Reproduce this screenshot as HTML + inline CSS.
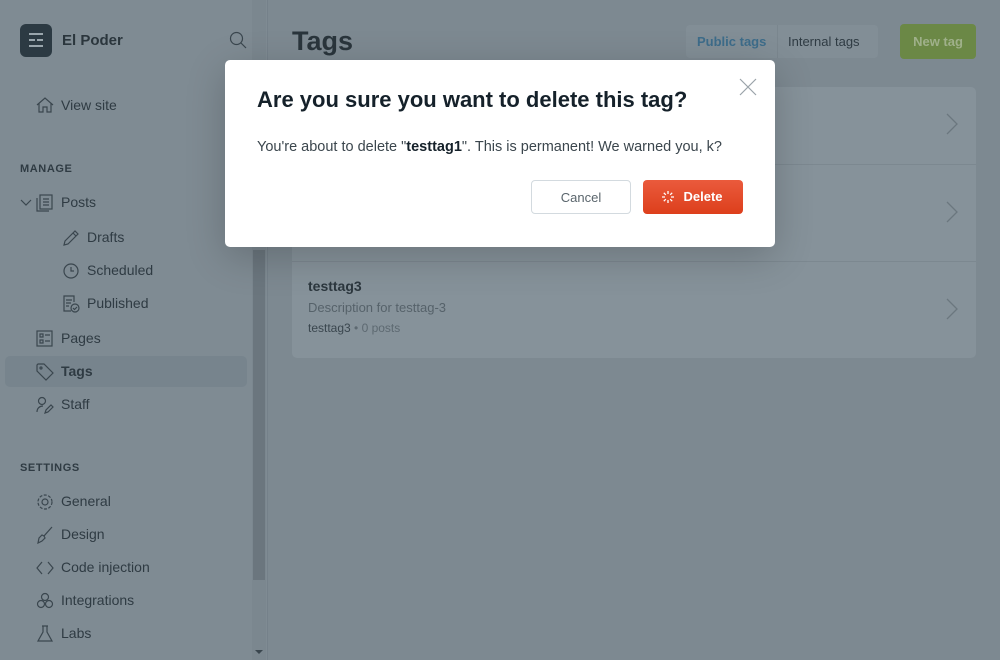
<!DOCTYPE html>
<html><head><meta charset="utf-8"><style>
*{box-sizing:border-box;margin:0;padding:0}
body{width:1000px;height:660px;overflow:hidden;font-family:"Liberation Sans",sans-serif;background:#7d8991;position:relative;color:#2f3a41}
.sb{position:absolute;left:0;top:0;width:268px;height:660px;background:#7f8b93;border-right:1px solid #75818a}
.logo{position:absolute;left:20px;top:24px;width:32px;height:33px;border-radius:6px;background:#2c3a43}
.logo i{position:absolute;height:2px;background:#9aa6ad}
.brand{position:absolute;left:62px;top:32px;font-weight:bold;font-size:15px;color:#2b363d}
.it{position:absolute;left:61px;font-size:14px;color:#2f3b43}
.sub{left:87px}
.hd{position:absolute;left:20px;font-size:11px;letter-spacing:.6px;color:#2f3b43;font-weight:bold}
.ic{position:absolute;stroke:#3a464e;fill:none;stroke-width:1.2}
.act{position:absolute;left:5px;top:356px;width:242px;height:31px;border-radius:5px;background:#77848d}
.track{position:absolute;left:252px;top:0;width:14px;height:660px;background:#7b878f}
.thumb{position:absolute;left:253px;top:250px;width:12px;height:330px;background:#6b767e}
h1{position:absolute;left:292px;top:26px;font-size:27px;font-weight:bold;color:#2a353c}
.seg{position:absolute;left:686px;top:25px;width:192px;height:33px;background:#828e96;border-radius:4px}
.seg span{position:absolute;top:9px;font-size:13px}
.new{position:absolute;left:900px;top:24px;width:76px;height:35px;background:#6b8846;border-radius:4px;color:#9fb08a;font-size:13px;font-weight:bold;text-align:center;line-height:35px}
.card{position:absolute;left:292px;top:87px;width:684px;height:271px;background:#86929a;border-radius:5px}
.card .ln{position:absolute;left:0;width:684px;height:1px;background:#7c8890}
.chev{position:absolute;left:946px;stroke:#6b777f;fill:none;stroke-width:1.3}
.modal{position:absolute;left:225px;top:60px;width:550px;height:187px;background:#fff;border-radius:5px;box-shadow:0 10px 40px rgba(0,0,0,.2)}
.modal h2{position:absolute;left:32px;top:27px;font-size:22px;font-weight:bold;color:#15212a}
.modal p{position:absolute;left:32px;top:79px;font-size:14.5px;color:#3b464d}
.btn{position:absolute;top:120px;height:34px;border-radius:4px;font-size:13px;text-align:center;line-height:34px}
</style></head><body>
<div class="sb">
 <div class="logo"><i style="left:9px;top:9px;width:14px"></i><i style="left:9px;top:15px;width:6px"></i><i style="left:17px;top:15px;width:6px"></i><i style="left:9px;top:21px;width:14px"></i></div>
 <div class="brand">El Poder</div>
 <svg class="ic" style="left:229px;top:31px" width="18" height="18"><circle cx="7.5" cy="7.5" r="6"/><path d="M12 12l5 5"/></svg>
 <svg class="ic" style="left:36px;top:96px" width="18" height="18"><path d="M1 9L9 2l8 7M3 7v9h4v-5h4v5h4V7"/></svg>
 <div class="it" style="top:97px">View site</div>
 <div class="hd" style="top:163px">MANAGE</div>
 <svg class="ic" style="left:20px;top:198px" width="12" height="10"><path d="M1 2l5 5 5-5"/></svg>
 <svg class="ic" style="left:36px;top:194px" width="18" height="18"><rect x="4" y="1" width="12" height="14"/><path d="M1 4v13h12M7 5h6M7 8h6M7 11h6"/></svg>
 <div class="it" style="top:194px">Posts</div>
 <svg class="ic" style="left:62px;top:229px" width="18" height="18"><path d="M2 16l1-4L13 2l3 3L6 15z M11 4l3 3"/></svg>
 <div class="it sub" style="top:229px">Drafts</div>
 <svg class="ic" style="left:62px;top:262px" width="18" height="18"><circle cx="9" cy="9" r="7"/><path d="M9 5v4h3"/></svg>
 <div class="it sub" style="top:262px">Scheduled</div>
 <svg class="ic" style="left:62px;top:295px" width="18" height="18"><path d="M9 16H2V1h10v6M4 5h6M4 8h5M4 11h3"/><circle cx="13" cy="13" r="4"/><path d="M11 13l1.5 1.5L15 12"/></svg>
 <div class="it sub" style="top:295px">Published</div>
 <svg class="ic" style="left:36px;top:330px" width="18" height="18"><rect x="1" y="1" width="15" height="15"/><path d="M4 4h3v3H4zM4 10h3v3H4zM9 5h5M9 11h5"/></svg>
 <div class="it" style="top:330px">Pages</div>
 <div class="act"></div>
 <svg class="ic" style="left:36px;top:363px" width="18" height="18"><path d="M1 2v6l9 9 7-7-9-9H2z"/><circle cx="5" cy="5" r="1"/></svg>
 <div class="it" style="top:363px;font-weight:bold">Tags</div>
 <svg class="ic" style="left:36px;top:396px" width="18" height="18"><circle cx="6" cy="5" r="3.5"/><path d="M1 16c0-4 3-6 6-6M9 17l1-3 5-5 2 2-5 5z"/></svg>
 <div class="it" style="top:396px">Staff</div>
 <div class="hd" style="top:462px">SETTINGS</div>
 <svg class="ic" style="left:36px;top:493px" width="18" height="18"><circle cx="9" cy="9" r="3"/><circle cx="9" cy="9" r="7" stroke-dasharray="3 1.5"/></svg>
 <div class="it" style="top:493px">General</div>
 <svg class="ic" style="left:36px;top:526px" width="18" height="18"><path d="M16 1L8 10l-2-1-3 3-1 5 4-2 3-3-1-2z"/></svg>
 <div class="it" style="top:526px">Design</div>
 <svg class="ic" style="left:36px;top:559px" width="18" height="18"><path d="M6 3L1 9l5 6M12 3l5 6-5 6"/></svg>
 <div class="it" style="top:559px">Code injection</div>
 <svg class="ic" style="left:36px;top:592px" width="18" height="18"><circle cx="9" cy="5" r="3.5"/><circle cx="5" cy="12" r="3.5"/><circle cx="13" cy="12" r="3.5"/></svg>
 <div class="it" style="top:592px">Integrations</div>
 <svg class="ic" style="left:36px;top:625px" width="18" height="18"><path d="M6 1h6M7 1v6L2 16h14L11 7V1"/></svg>
 <div class="it" style="top:625px">Labs</div>
</div>
<div class="track"></div><div class="thumb"></div>
<div style="position:absolute;left:255px;top:650px;border:4px solid transparent;border-top:4px solid #3a464e"></div>
<h1>Tags</h1>
<div class="seg"><span style="left:11px;color:#3d6c8a;font-weight:bold">Public tags</span><span style="left:91px;top:0;width:1px;height:33px;background:#7a868e"></span><span style="left:102px;color:#2f3b43">Internal tags</span></div>
<div class="new">New tag</div>
<div class="card"><div class="ln" style="top:77px"></div><div class="ln" style="top:174px"></div>
 <div style="position:absolute;left:16px;top:191px;font-size:14px;font-weight:bold;color:#2c373e">testtag3</div>
 <div style="position:absolute;left:16px;top:213px;font-size:13px;color:#56626a">Description for testtag-3</div>
 <div style="position:absolute;left:16px;top:234px;font-size:12px;color:#3a464e">testtag3 <span style="color:#5d6971">• 0 posts</span></div>
</div>
<svg class="chev" style="top:113px" width="14" height="22"><path d="M1 1l10 10L1 21"/></svg>
<svg class="chev" style="top:201px" width="14" height="22"><path d="M1 1l10 10L1 21"/></svg>
<svg class="chev" style="top:298px" width="14" height="22"><path d="M1 1l10 10L1 21"/></svg>
<div class="modal">
 <svg style="position:absolute;left:514px;top:18px" width="18" height="18" stroke="#9aa3a9" stroke-width="1.2"><path d="M1 1l16 16M17 1L1 17"/></svg>
 <h2>Are you sure you want to delete this tag?</h2>
 <p>You're about to delete "<b style="color:#15212a">testtag1</b>". This is permanent! We warned you, k?</p>
 <div class="btn" style="left:306px;width:100px;border:1px solid #d3dadf;color:#5a656c">Cancel</div>
 <div class="btn" style="left:418px;width:100px;background:linear-gradient(#ea5a3c,#dd3f1c);color:#fff;font-weight:bold">
  <svg style="position:absolute;left:18px;top:10px" width="14" height="14" stroke="#fff" stroke-width="1.3"><path d="M7 1v3M7 10v3M1 7h3M10 7h3M2.8 2.8l2 2M9.2 9.2l2 2M11.2 2.8l-2 2M4.8 9.2l-2 2"/></svg>
  <span style="margin-left:20px">Delete</span></div>
</div>
</body></html>
